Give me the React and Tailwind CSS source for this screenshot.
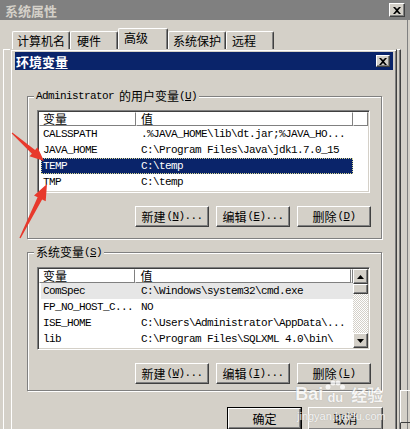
const RAISED = "border border-t-white border-l-white border-r-[#404040] border-b-[#404040] shadow-[inset_-1px_-1px_0_#808080]";
const MONO = "font-['Liberation_Mono',monospace] text-[11px] tracking-[-0.6px]";

function CloseBtn({ w, h }) {
  return (
    <div className={`${RAISED} bg-[#d4d0c8] flex items-center justify-center ${w} ${h}`}>
      <svg width="8" height="7" viewBox="0 0 8 7">
        <path d="M0 0h2l2 2 2-2h2L5 3.5 8 7H6L4 5 2 7H0l3-3.5z" fill="#000" />
      </svg>
    </div>
  );
}

function Btn({ label, acc, tail = "", className = "" }) {
  return (
    <div className={`${RAISED} bg-[#d4d0c8] w-[74px] h-[21px] flex items-center justify-center ${className}`}>
      <span className="text-[12px] leading-none">{label}</span>
      <span className={`${MONO} leading-none ml-[1px]`}>
        (<span className="underline">{acc}</span>){tail}
      </span>
    </div>
  );
}

function Header() {
  return (
    <div className="flex h-[14px] shrink-0">
      <div className="w-[97px] border border-t-white border-l-white border-r-[#808080] border-b-[#808080] pl-[3px] text-[12px] leading-[12px]">变量</div>
      <div className="w-[217px] border border-t-white border-l-white border-r-[#808080] border-b-[#808080] pl-[4px] text-[12px] leading-[12px]">值</div>
      <div className="flex-1 border border-t-white border-l-white border-r-[#808080] border-b-[#808080]"></div>
    </div>
  );
}

function Row({ name, value, selected, hover }) {
  const base = selected
    ? "bg-[#0a246a] text-white outline outline-1 outline-dotted outline-[#d8d890] -outline-offset-1"
    : hover
    ? "bg-[#e6e6e6]"
    : "";
  return (
    <div className={`ml-[2px] w-[312px] h-[16px] flex items-center ${base}`}>
      <div className={`w-[95px] pl-[2px] whitespace-nowrap overflow-hidden ${MONO}`}>{name}</div>
      <div className={`flex-1 pl-[5px] whitespace-nowrap overflow-hidden ${MONO}`}>{value}</div>
    </div>
  );
}

const LIST_BORDER = "border border-t-[#808080] border-l-[#808080] border-r-white border-b-white shadow-[inset_1px_1px_0_#404040,inset_-1px_-1px_0_#d4d0c8] p-px bg-white";

function GroupBox({ label, children, className = "" }) {
  return (
    <div className={`relative ml-[16px] w-[355px] border border-[#808080] shadow-[inset_1px_1px_0_white,1px_1px_0_white] ${className}`}>
      <div className="absolute left-[6px] -top-[9px] px-[2px] bg-[#d4d0c8] leading-[16px] flex items-center">{label}</div>
      {children}
    </div>
  );
}

function Arrow({ points }) {
  return <polygon points={points} fill="#e8392c" />;
}

export default function App() {
  return (
    <div className="relative w-[410px] h-[429px] overflow-hidden bg-[#d4d0c8] font-['Noto_Sans_CJK_SC',sans-serif] text-[12px] text-black">
      {/* Outer window: 系统属性 */}
      <div className="flex flex-col h-full">
        <div className="h-[20px] shrink-0 bg-[#808080] flex items-center justify-between pl-[5px] pr-[5px]">
          <span className="font-bold text-[#d4d0c8] text-[13px] leading-none">系统属性</span>
          <CloseBtn w="w-[16px]" h="h-[14px]" />
        </div>
        <div className="h-[29px] shrink-0 flex items-end pl-[12px]">
          <div className="w-[58px] h-[18px] border-t border-l border-t-white border-l-white border-r border-r-[#404040] shadow-[inset_-1px_0_0_#808080] rounded-t-[2px] pl-[4px] leading-[18px]">计算机名</div>
          <div className="w-[48px] h-[18px] border-t border-l border-t-white border-l-white border-r border-r-[#404040] shadow-[inset_-1px_0_0_#808080] rounded-t-[2px] pl-[6px] leading-[18px]">硬件</div>
          <div className="w-[50px] h-[21px] border-t border-l border-t-white border-l-white border-r border-r-[#404040] shadow-[inset_-1px_0_0_#808080] rounded-t-[2px] pl-[5px] leading-[18px]">高级</div>
          <div className="w-[58px] h-[18px] border-t border-l border-t-white border-l-white border-r border-r-[#404040] shadow-[inset_-1px_0_0_#808080] rounded-t-[2px] pl-[4px] leading-[18px]">系统保护</div>
          <div className="w-[48px] h-[18px] border-t border-l border-t-white border-l-white border-r border-r-[#404040] shadow-[inset_-1px_0_0_#808080] rounded-t-[2px] pl-[5px] leading-[18px]">远程</div>
        </div>
        <div className="ml-[3px] w-[398px] flex-1 border border-t-white border-l-white border-r-[#404040] border-b-0 shadow-[inset_-1px_0_0_#808080]"></div>
      </div>

      {/* outer window right edge & peeking button */}
      <div className="absolute left-[407px] top-[20px] w-[3px] h-[409px] border-l border-l-[#808080]"></div>
      <div className="absolute left-[400px] top-[390px] w-[12px] h-[33px] border border-t-white border-l-white border-b-[#404040] border-r-[#404040]"></div>

      {/* Inner dialog: 环境变量 */}
      <div className="absolute left-[10px] top-[49px] w-[387px] h-[400px] bg-[#d4d0c8] border border-t-[#d4d0c8] border-l-[#d4d0c8] border-r-[#404040] border-b-[#404040] shadow-[inset_1px_1px_0_white,inset_-1px_-1px_0_#808080] flex flex-col">
        <div className="mt-[2px] ml-[4px] mr-[3px] h-[18px] bg-[#0a246a] flex items-center justify-between pl-[1px] pr-[3px]">
          <span className="text-white font-bold text-[13px] leading-none">环境变量</span>
          <CloseBtn w="w-[14px]" h="h-[12px]" />
        </div>

        <GroupBox
          className="mt-[26px]"
          label={
            <>
              <span className={`${MONO}`}>Administrator</span>
              <span className="ml-[5px]">的用户变量</span>
              <span className={`${MONO}`}>(<span className="underline">U</span>)</span>
            </>
          }
        >
          <div className="pt-[13px] pl-[9px] pb-[11px]">
            <div className={`w-[333px] h-[83px] flex flex-col ${LIST_BORDER}`}>
              <Header />
              <Row name="CALSSPATH" value=".%JAVA_HOME\lib\dt.jar;%JAVA_HO..." />
              <Row name="JAVA_HOME" value="C:\Program Files\Java\jdk1.7.0_15" />
              <Row name="TEMP" value="C:\temp" selected />
              <Row name="TMP" value="C:\temp" />
            </div>
            <div className="mt-[13px] ml-[98px] flex gap-[7px]">
              <Btn label="新建" acc="N" tail="..." />
              <Btn label="编辑" acc="E" tail="..." />
              <Btn label="删除" acc="D" />
            </div>
          </div>
        </GroupBox>

        <GroupBox
          className="mt-[13px]"
          label={
            <>
              <span>系统变量</span>
              <span className={`${MONO}`}>(<span className="underline">S</span>)</span>
            </>
          }
        >
          <div className="pt-[14px] pl-[9px] pb-[6px]">
            <div className={`w-[333px] h-[83px] flex ${LIST_BORDER}`}>
              <div className="w-[314px] flex flex-col">
                <Header />
                <Row name="ComSpec" value="C:\Windows\system32\cmd.exe" hover />
                <Row name="FP_NO_HOST_C..." value="NO" />
                <Row name="ISE_HOME" value="C:\Users\Administrator\AppData\..." />
                <Row name="lib" value="C:\Program Files\SQLXML 4.0\bin\" />
              </div>
              <div className="w-[16px] flex flex-col">
                <div className={`${RAISED} bg-[#d4d0c8] h-[15px] flex items-center justify-center`}>
                  <svg width="7" height="4" viewBox="0 0 7 4"><path d="M3.5 0L7 4H0z" fill="#000" /></svg>
                </div>
                <div className={`${RAISED} bg-[#d4d0c8] h-[10px]`}></div>
                <div className="flex-1 bg-[repeating-conic-gradient(#d4d0c8_0%_25%,#ffffff_0%_50%)] bg-[length:2px_2px]"></div>
                <div className={`${RAISED} bg-[#d4d0c8] h-[15px] flex items-center justify-center`}>
                  <svg width="7" height="4" viewBox="0 0 7 4"><path d="M0 0h7L3.5 4z" fill="#000" /></svg>
                </div>
              </div>
            </div>
            <div className="mt-[13px] ml-[98px] flex gap-[7px]">
              <Btn label="新建" acc="W" tail="..." />
              <Btn label="编辑" acc="I" tail="..." />
              <Btn label="删除" acc="L" />
            </div>
          </div>
        </GroupBox>

        <div className="mt-[16px] ml-[216px] flex gap-[6px]">
          <div className="w-[75px] h-[23px] border border-black">
            <div className={`${RAISED} bg-[#d4d0c8] w-full h-full flex items-center justify-center`}>确定</div>
          </div>
          <div className={`${RAISED} bg-[#d4d0c8] w-[75px] h-[23px] flex items-center justify-center`}>取消</div>
        </div>
      </div>

      {/* Baidu watermark */}
      <div className="absolute left-[293px] top-[384px] flex flex-col items-center pointer-events-none opacity-80">
        <div className="flex items-center text-white [text-shadow:0_0_1px_#9a9a9a] leading-none">
          <span className="font-['Liberation_Sans',sans-serif] font-bold text-[18px]">Bai</span>
          <span className="relative w-[24px] h-[20px] flex items-end justify-center">
            <svg className="absolute left-[2px] top-[-4px]" width="20" height="10" viewBox="0 0 20 10">
              <circle cx="3" cy="7" r="2.5" fill="#fff" />
              <circle cx="8" cy="3" r="2.5" fill="#fff" />
              <circle cx="13" cy="3" r="2.5" fill="#fff" />
              <circle cx="17.5" cy="7" r="2.5" fill="#fff" />
            </svg>
            <span className="font-['Liberation_Sans',sans-serif] font-bold text-[13px] text-white">du</span>
          </span>
          <span className="ml-[4px] text-[16px] font-bold">经验</span>
        </div>
        <div className="font-['Liberation_Sans',sans-serif] text-[11px] text-white [text-shadow:0_0_1px_#9a9a9a] mt-[4px] ml-[4px]">jingyan.baidu.com</div>
      </div>

      {/* Red annotation arrows */}
      <svg className="absolute left-0 top-0 pointer-events-none" width="410" height="429" viewBox="0 0 410 429">
        <Arrow points="11.7,133.4 31.9,153.7 29.5,156.3 44,161 37.5,147.3 35.1,149.9 12.3,132.6" />
        <Arrow points="19.4,237.7 37.6,197.2 34,195.4 47,184 45.7,201.2 42.1,199.4 20.6,238.3" />
      </svg>
    </div>
  );
}
